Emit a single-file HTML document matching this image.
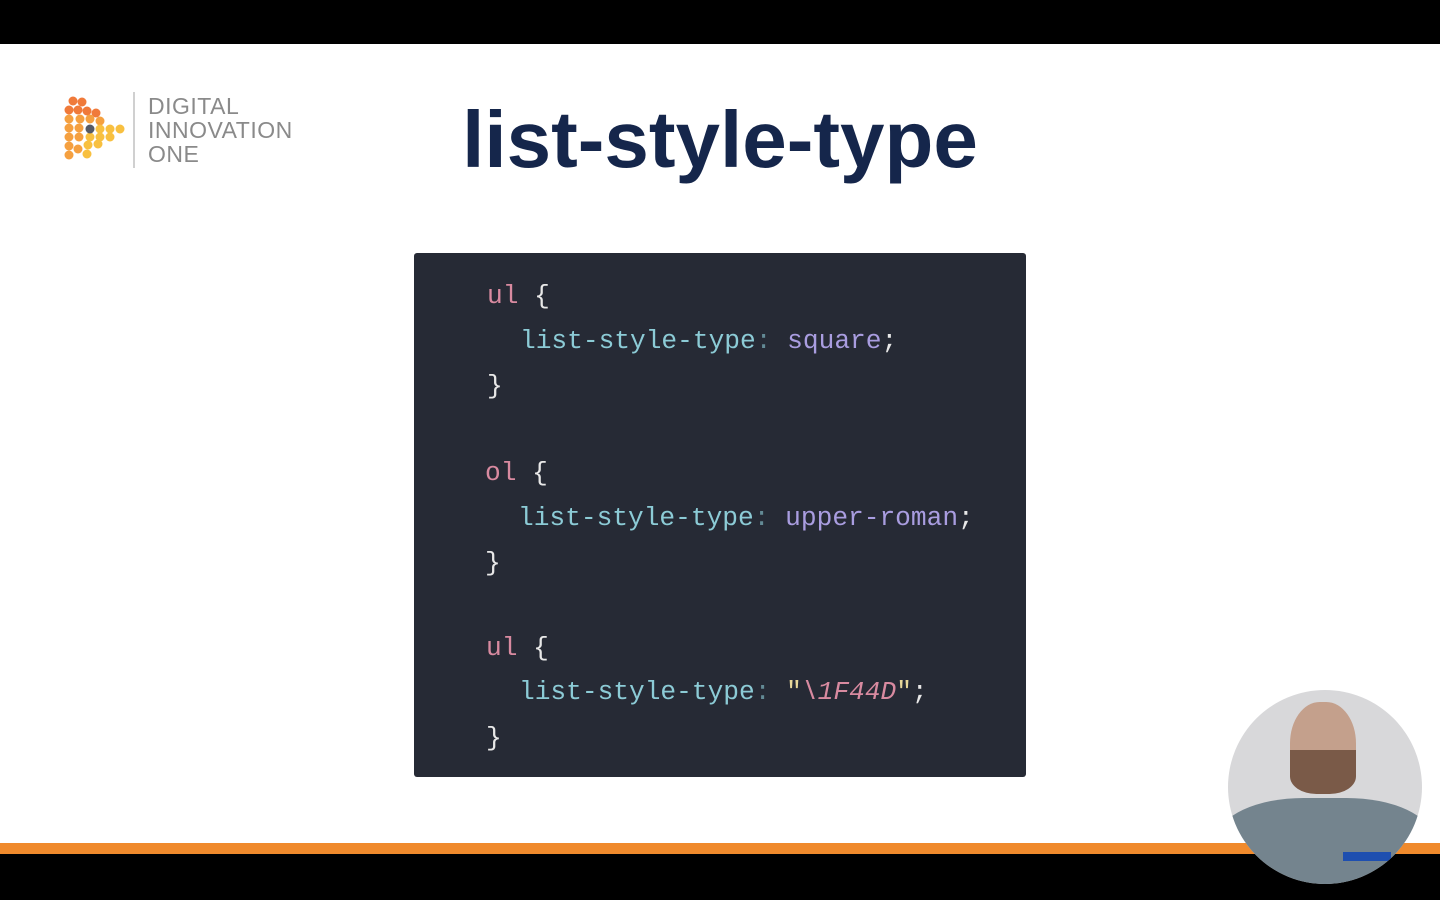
<!DOCTYPE html>
<html><head><meta charset="utf-8"><style>
*{margin:0;padding:0}
body{width:1440px;height:900px;background:#000;position:relative;overflow:hidden;font-family:"Liberation Sans",sans-serif}
.page{position:absolute;left:0;top:44px;width:1440px;height:800px;background:#fff}
.orange{position:absolute;left:0;top:843px;width:1440px;height:11px;background:#f08a2c}
.title{position:absolute;left:0;width:1440px;text-align:center;top:90px;font-size:80px;font-weight:bold;color:#15264b;letter-spacing:0;line-height:100px}
.code{position:absolute;left:414px;top:253px;width:612px;height:524px;background:#262a35;border-radius:3px}
.ln{position:absolute;font-family:"Liberation Mono",monospace;font-size:26.2px;line-height:30px;white-space:pre;color:#d8d8d8}
.k{color:#d88aa0}.p{color:#8ccbd6}.v{color:#a99de0}.s{color:#e8d89a}.b{color:#e8e8e8}
.logo{position:absolute;left:60px;top:92px}
.lt{position:absolute;left:148px;top:94px;color:#8a8a8a;font-size:23px;line-height:24px;letter-spacing:0.5px}
.cam{position:absolute;left:1228px;top:690px;width:194px;height:194px;border-radius:50%;background:#d8d8da;overflow:hidden}
</style></head><body>
<div class="page"></div>
<div class="orange"></div>
<svg class="logo" width="70" height="75" viewBox="0 0 70 75">
<g fill="#f07a3a"><circle cx="13" cy="9" r="4.5"/><circle cx="22" cy="10" r="4.5"/><circle cx="9" cy="18" r="4.5"/><circle cx="18" cy="18" r="4.5"/><circle cx="27" cy="19" r="4.5"/><circle cx="36" cy="21" r="4.5"/></g>
<g fill="#f5a040"><circle cx="9" cy="27" r="4.5"/><circle cx="20" cy="27" r="4.5"/><circle cx="30" cy="27" r="4.5"/><circle cx="40" cy="29" r="4.5"/><circle cx="9" cy="36" r="4.5"/><circle cx="19" cy="36" r="4.5"/><circle cx="19" cy="45" r="4.5"/><circle cx="9" cy="45" r="4.5"/><circle cx="9" cy="54" r="4.5"/><circle cx="9" cy="63" r="4.5"/><circle cx="18" cy="57" r="4.5"/></g>
<g fill="#f8c040"><circle cx="40" cy="37" r="4.5"/><circle cx="50" cy="37" r="4.5"/><circle cx="60" cy="37" r="4.5"/><circle cx="30" cy="45" r="4.5"/><circle cx="40" cy="45" r="4.5"/><circle cx="50" cy="45" r="4.5"/><circle cx="28" cy="53" r="4.5"/><circle cx="38" cy="52" r="4.5"/><circle cx="27" cy="62" r="4.5"/></g>
<circle cx="30" cy="37" r="4.5" fill="#555a66"/>
</svg>
<div style="position:absolute;left:133px;top:92px;width:2px;height:76px;background:#d0d0d0"></div>
<div class="lt">DIGITAL<br>INNOVATION<br>ONE</div>
<div class="title">list-style-type</div>
<div class="code"></div>
<div class="ln" style="left:487px;top:281px"><span class="k">ul</span> <span class="b">{</span></div>
<div class="ln" style="left:520px;top:326px"><span class="p">list-style-type</span><span class="p" style="opacity:.6">:</span> <span class="v">square</span><span class="b">;</span></div>
<div class="ln" style="left:487px;top:371px"><span class="b">}</span></div>
<div class="ln" style="left:485px;top:458px"><span class="k">ol</span> <span class="b">{</span></div>
<div class="ln" style="left:518px;top:503px"><span class="p">list-style-type</span><span class="p" style="opacity:.6">:</span> <span class="v">upper-roman</span><span class="b">;</span></div>
<div class="ln" style="left:485px;top:548px"><span class="b">}</span></div>
<div class="ln" style="left:486px;top:633px"><span class="k">ul</span> <span class="b">{</span></div>
<div class="ln" style="left:519px;top:677px"><span class="p">list-style-type</span><span class="p" style="opacity:.6">:</span> <span class="s">"</span><span class="k" style="font-style:italic">\1F44D</span><span class="s">"</span><span class="b">;</span></div>
<div class="ln" style="left:486px;top:723px"><span class="b">}</span></div>
<div class="cam"><div style="position:absolute;left:62px;top:12px;width:66px;height:92px;border-radius:45%;background:#c4a08c"></div><div style="position:absolute;left:62px;top:60px;width:66px;height:44px;border-radius:0 0 40% 40%;background:#7a5a48"></div><div style="position:absolute;left:-10px;top:108px;width:214px;height:100px;border-radius:40% 40% 0 0;background:#74848e"></div><div style="position:absolute;left:115px;top:162px;width:48px;height:9px;background:#1e4fb0"></div></div>
</body></html>
